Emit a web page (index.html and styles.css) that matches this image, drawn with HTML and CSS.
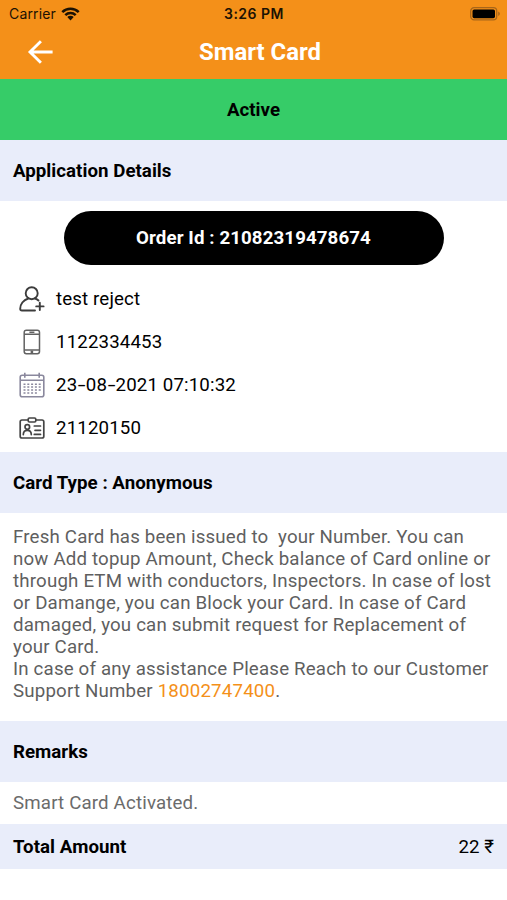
FILE: index.html
```html
<!DOCTYPE html>
<html lang="en">
<head>
  <meta charset="UTF-8">
  <meta name="viewport" content="width=device-width, initial-scale=1">
  <title>Smart Card</title>
  <link rel="stylesheet" href="styles.css">
</head>
<body>
  <header class="header">
    <div class="status-bar">
      <div class="carrier">
        <span>Carrier</span>
        <svg class="wifi" width="19" height="14" viewBox="0 0 19 14">
          <path d="M1.3 5.1a11.6 11.6 0 0 1 16.4 0M4.3 8.1a7.4 7.4 0 0 1 10.4 0" fill="none" stroke="#1c1203" stroke-width="2.5"/>
          <path d="M6.3 10.1a4.6 4.6 0 0 1 6.4 0L9.5 13.5z" fill="#1c1203"/>
        </svg>
      </div>
      <span class="time">3:26 PM</span>
      <svg class="battery" width="31" height="14" viewBox="0 0 31 14">
        <rect x=".7" y=".7" width="26" height="12.2" rx="3.4" fill="none" stroke="#a8661a" stroke-width="1.3"/>
        <rect x="2.5" y="2.4" width="22.5" height="8.8" rx="1.7" fill="#000"/>
        <path d="M28.2 4.6c2.2.9 2.2 3.5 0 4.4z" fill="#a8661a"/>
      </svg>
    </div>
    <div class="nav-bar">
      <svg class="back" width="26" height="26" viewBox="0 0 26 26">
        <path d="M13.9 2.2 3 13l10.9 10.8M3 13h22.6" fill="none" stroke="#fff" stroke-width="2.9"/>
      </svg>
      <h1>Smart Card</h1>
    </div>
  </header>

  <div class="status">Active</div>

  <h2 class="section-title">Application Details</h2>
  <div class="details">
    <div class="order-id">Order Id : 21082319478674</div>
    <ul class="info">
      <li>
        <svg width="26" height="26" viewBox="0 0 26 26" fill="none" stroke="#3c3c3c" stroke-width="1.9" stroke-linecap="round">
          <circle cx="12.7" cy="7.2" r="6"/>
          <path d="M9.3 12.5C4.2 14 1.2 18.4 1.2 22.7Q1.2 24.5 3 24.5H16M16 12.5Q18.2 13.1 19.5 14.5M20.8 16.8V24M17.2 20.4H24.6"/>
        </svg>
        <span>test reject</span>
      </li>
      <li>
        <svg width="26" height="26" viewBox="0 0 26 26" fill="none" stroke="#626262" stroke-width="1.5">
          <rect x="5.2" y="1.2" width="15.3" height="23.6" rx="2.2"/>
          <path d="M5.2 5.3h15.3M5.2 21h15.3M10.4 3.2h5"/>
          <circle cx="12.9" cy="22.9" r=".7"/>
        </svg>
        <span>1122334453</span>
      </li>
      <li>
        <svg width="26" height="26" viewBox="0 0 26 26" fill="none" stroke="#8a889d" stroke-width="1.6">
          <rect x="1.2" y="3.2" width="23.6" height="21.5" rx="2"/>
          <path d="M1.2 8.3h23.6M5.8.8v5M20.2.8v5"/>
          <path d="M4.5 12.3h17.5M4.5 15h17.5M4.5 18h17.5M4.5 21h14" stroke-dasharray="2 1.8"/>
        </svg>
        <span>23<span class="dash">-</span>08<span class="dash">-</span>2021 07:10:32</span>
      </li>
      <li>
        <svg width="26" height="26" viewBox="0 0 26 26" fill="none" stroke="#444" stroke-width="1.7" stroke-linecap="round" stroke-linejoin="round">
          <path d="M9 5H3Q1.2 5 1.2 6.8V21.2Q1.2 23 3 23H23Q24.8 23 24.8 21.2V6.8Q24.8 5 23 5H17"/>
          <rect x="9.2" y="3" width="7.6" height="4" rx="1.2"/>
          <circle cx="8.3" cy="12" r="2.3"/>
          <path d="M4.3 19.6c0-3 1.5-4.3 4-4.3s4 1.3 4 4.3M15.3 11h6.2M16 15.3h5.5M15.3 19.4h6.2"/>
        </svg>
        <span>21120150</span>
      </li>
    </ul>
  </div>

  <h2 class="section-title">Card Type : Anonymous</h2>
  <div class="message">
    <p>Fresh Card has been issued to&nbsp; your Number. You can now Add topup Amount, Check balance of Card online or through ETM with conductors, Inspectors. In case of lost or Damange, you can Block your Card. In case of Card damaged, you can submit request for Replacement of your Card.</p>
    <p>In case of any assistance Please Reach to our Customer Support Number <a href="tel:18002747400">18002747400</a>.</p>
  </div>

  <h2 class="section-title">Remarks</h2>
  <p class="remarks">Smart Card Activated.</p>

  <div class="total">
    <strong>Total Amount</strong>
    <span>22 ₹</span>
  </div>
</body>
</html>
```
FILE: styles.css
```css
* {
  box-sizing: border-box;
}

body {
  font-family: Roboto, sans-serif;
  font-size: 18.7px;
  line-height: 22px;
  color: #000;
  background-color: #fff;
  margin: 0;
}

h1, h2, p, ul {
  margin: 0;
  padding: 0;
}

.header {
  height: 79px;
  background-color: #f49019;
}

.status-bar {
  display: grid;
  grid-template-columns: 1fr auto 1fr;
  align-items: center;
  height: 27px;
  padding: 0 6px 0 9px;
  font-family: Inter, sans-serif;
  font-size: 14px;
  color: #1c1203;
}

.carrier {
  display: flex;
  align-items: center;
  gap: 5px;
  letter-spacing: 0.15px;
}

.time {
  padding-right: 2px;
  font-weight: 600;
  letter-spacing: 0.5px;
}

.battery {
  justify-self: end;
}

.nav-bar {
  display: grid;
  grid-template-columns: 26px 1fr 13px;
  align-items: center;
  height: 50px;
  padding: 0 27px;
}

.nav-bar h1 {
  font-size: 23.9px;
  line-height: 28px;
  font-weight: 700;
  text-align: center;
  color: #fff;
}

.status {
  height: 61px;
  line-height: 62px;
  text-align: center;
  font-weight: 700;
  background-color: #36cc68;
}

.section-title {
  height: 61px;
  padding: 0 13px;
  font-size: inherit;
  line-height: 62px;
  font-weight: 700;
  letter-spacing: 0.03px;
  background-color: #e9edfa;
}

.details {
  height: 251px;
  padding-top: 10px;
}

.order-id {
  width: 380px;
  height: 54px;
  margin: 0 auto;
  border-radius: 27px;
  line-height: 54px;
  letter-spacing: 0.1px;
  text-align: center;
  font-weight: 700;
  color: #fff;
  background-color: #000;
}

.info {
  padding: 13px 18.500px 0;
  list-style: none;
}

.info li {
  display: flex;
  align-items: center;
  gap: 11.5px;
  height: 42.8px;
  letter-spacing: 0.13px;
}

.dash {
  display: inline-block;
  margin: 0 1.6px;
  transform: scaleX(1.5);
}

.message {
  height: 208px;
  padding: 13px 13px 0;
  letter-spacing: 0.18px;
  color: #5f5f5f;
}

.message a {
  color: #f49019;
  text-decoration: none;
}

.remarks {
  height: 42px;
  padding: 0 13px;
  line-height: 42px;
  letter-spacing: 0.16px;
  color: #6b6b6b;
}

.total {
  display: flex;
  justify-content: space-between;
  align-items: center;
  height: 45px;
  padding: 0 13px;
  letter-spacing: 0.06px;
  background-color: #e9edfa;
}
```
